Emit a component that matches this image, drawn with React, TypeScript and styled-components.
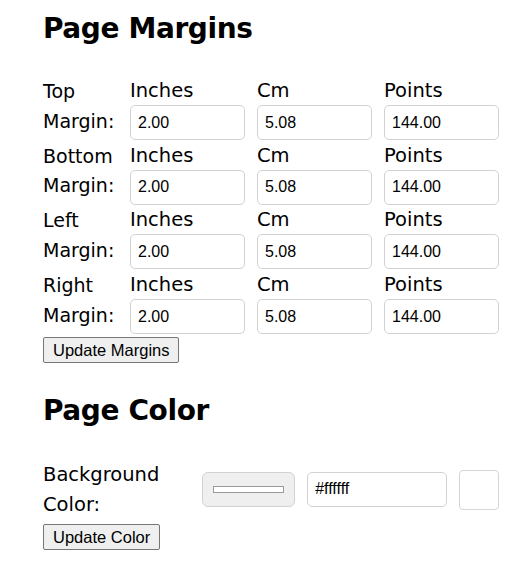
import React from "react";
import styled, { createGlobalStyle } from "styled-components";

const GlobalStyle = createGlobalStyle`
  html, body { margin: 0; padding: 0; background: #fff; }
  body { font-family: "DejaVu Sans", "Noto Sans", sans-serif; color: #000; }
  * { box-sizing: border-box; }
`;

const Page = styled.div`
  width: 511px;
  padding: 0 12px 0 43px;
`;

const Section = styled.section`
  display: flex;
  flex-direction: column;
  align-items: flex-start;
`;

const Heading = styled.h2<{ $top: number; $bottom: number }>`
  font-family: "DejaVu Sans", sans-serif;
  font-weight: 700;
  font-size: 28px;
  line-height: 40px;
  letter-spacing: -0.4px;
  margin: ${(p) => p.$top}px 0 ${(p) => p.$bottom}px;
`;

const MarginGrid = styled.div`
  display: flex;
  flex-direction: column;
  width: 456px;
`;

const MarginRow = styled.div`
  display: grid;
  grid-template-columns: 75px repeat(3, 115px);
  column-gap: 12px;
  height: 64.7px;
`;

const RowLabel = styled.div`
  font-size: 19px;
  line-height: 29.5px;
  white-space: nowrap;
  padding-top: 2px;
`;

const Field = styled.label`
  display: flex;
  flex-direction: column;
  font-size: 19.5px;
  line-height: 30px;
  padding-top: 1px;
`;

const TextInput = styled.input<{ $width?: number }>`
  width: ${(p) => (p.$width ? `${p.$width}px` : "100%")};
  height: 35px;
  margin-top: -1px;
  border: 1px solid #d2d2d2;
  border-radius: 5px;
  padding: 0 7px;
  font-family: "Liberation Sans", Arial, sans-serif;
  font-size: 16px;
  color: #000;
  background: #fff;
  outline: none;
`;

const Button = styled.button<{ $top: number }>`
  margin-top: ${(p) => p.$top}px;
  font-family: "Liberation Sans", Arial, sans-serif;
  font-size: 16.5px;
  color: #000;
  background: #efefef;
  border: 1px solid #767676;
  border-radius: 2px;
  padding: 1px 9px;
  height: 26px;
  line-height: 20px;
`;

const ColorRow = styled.div`
  display: flex;
  align-items: center;
  width: 456px;
  height: 60px;
  margin-top: 2px;
`;

const ColorLabel = styled.div`
  width: 160px;
  font-size: 19.5px;
  line-height: 30px;
`;

const ColorPicker = styled.input`
  width: 93px;
  height: 35px;
  margin: 0 12px 0 0;
  padding: 9px 8px;
  background: #efefef;
  border: 1px solid #d2d2d2;
  border-radius: 6px;
  &::-webkit-color-swatch-wrapper { padding: 4px 2px; }
  &::-webkit-color-swatch { border: 1px solid #9a9a9a; border-radius: 0; }
`;

const Preview = styled.div<{ $color: string }>`
  width: 40px;
  height: 40px;
  margin-left: 12px;
  border: 1px solid #d6d6d6;
  border-radius: 4px;
  background: ${(p) => p.$color};
`;

const margins = [
  ["Top", "2.00", "5.08", "144.00"],
  ["Bottom", "2.00", "5.08", "144.00"],
  ["Left", "2.00", "5.08", "144.00"],
  ["Right", "2.00", "5.08", "144.00"],
];

export default function App() {
  return (
    <Page>
      <GlobalStyle />
      <Section>
        <Heading $top={9} $bottom={26}>Page Margins</Heading>
        <MarginGrid>
          {margins.map(([name, inch, cm, pt]) => (
            <MarginRow key={name}>
              <RowLabel>
                {name}
                <br />
                Margin:
              </RowLabel>
              <Field>
                Inches
                <TextInput defaultValue={inch} />
              </Field>
              <Field>
                Cm
                <TextInput defaultValue={cm} />
              </Field>
              <Field>
                Points
                <TextInput defaultValue={pt} />
              </Field>
            </MarginRow>
          ))}
        </MarginGrid>
        <Button $top={3}>Update Margins</Button>
      </Section>
      <Section>
        <Heading $top={28} $bottom={27}>Page Color</Heading>
        <ColorRow>
          <ColorLabel>
            Background
            <br />
            Color:
          </ColorLabel>
          <ColorPicker type="color" defaultValue="#ffffff" />
          <TextInput $width={140} defaultValue="#ffffff" />
          <Preview $color="#ffffff" />
        </ColorRow>
        <Button $top={4}>Update Color</Button>
      </Section>
    </Page>
  );
}
